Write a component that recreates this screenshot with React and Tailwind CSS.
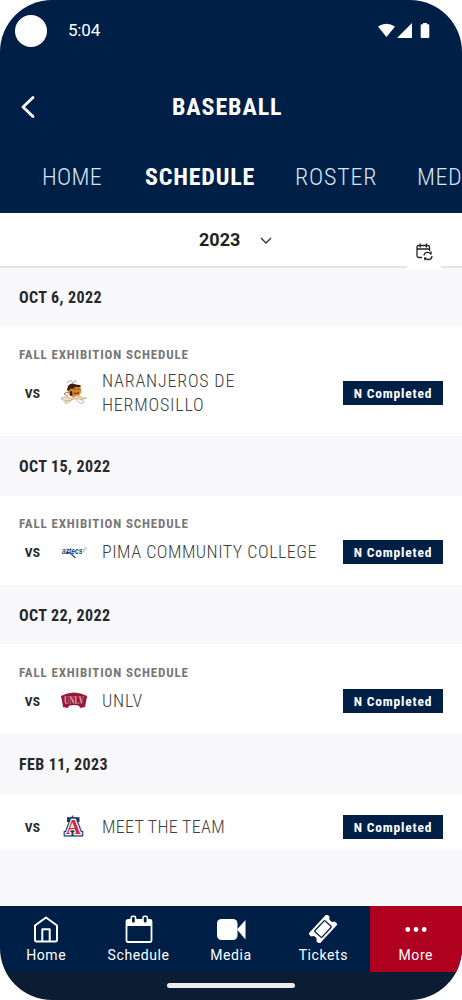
const TABS = [
  { label: 'HOME', active: false, style: 'w-[62px] tracking-[0.3px]' },
  { label: 'SCHEDULE', active: true, style: 'w-[109px] tracking-[0.8px]' },
  { label: 'ROSTER', active: false, style: 'w-[81px] tracking-[0.8px]' },
  { label: 'MEDIA', active: false, style: 'w-[70px] tracking-[0.5px]' },
];

const GAMES = [
  {
    date: 'OCT 6, 2022',
    note: 'FALL EXHIBITION SCHEDULE',
    lines: ['NARANJEROS DE', 'HERMOSILLO'],
    Logo: NaranjerosLogo,
    headerHeight: 'h-[58px]',
    bodyHeight: 'h-[110px] pt-[21px]',
    rowHeight: 'h-[50px]',
    spacing: 'tracking-[0.8px]',
  },
  {
    date: 'OCT 15, 2022',
    note: 'FALL EXHIBITION SCHEDULE',
    lines: ['PIMA COMMUNITY COLLEGE'],
    Logo: AztecsLogo,
    headerHeight: 'h-[60px]',
    bodyHeight: 'h-[89px] pt-5',
    rowHeight: 'h-[30px]',
    spacing: 'tracking-[0.5px]',
  },
  {
    date: 'OCT 22, 2022',
    note: 'FALL EXHIBITION SCHEDULE',
    lines: ['UNLV'],
    Logo: UnlvLogo,
    headerHeight: 'h-[59px]',
    bodyHeight: 'h-[90px] pt-[21px]',
    rowHeight: 'h-[30px]',
    spacing: 'tracking-[0.8px]',
  },
  {
    date: 'FEB 11, 2023',
    note: '',
    lines: ['MEET THE TEAM'],
    Logo: ArizonaLogo,
    headerHeight: 'h-[60px]',
    bodyHeight: 'h-[56px] pt-[18px]',
    rowHeight: 'h-[30px]',
    spacing: 'tracking-[0.3px]',
  },
];

const NAV_ITEMS = [
  { label: 'Home', Icon: HomeIcon },
  { label: 'Schedule', Icon: CalendarIcon },
  { label: 'Media', Icon: VideoIcon },
  { label: 'Tickets', Icon: TicketIcon },
  { label: 'More', Icon: DotsIcon, active: true },
];

function HomeIcon() {
  return (
    <svg className="w-7 h-7" viewBox="0 0 28 28" fill="none" stroke="white" strokeWidth="2" strokeLinejoin="round">
      <path d="M14 2.5L25 10.5V24.8Q25 26.5 23.3 26.5H4.7Q3 26.5 3 24.8V10.5Z" />
      <path d="M10.3 26.5V14.3H17.7V26.5" />
    </svg>
  );
}

function CalendarIcon() {
  return (
    <svg className="w-7 h-7" viewBox="0 0 28 28" fill="none">
      <rect x="1.5" y="5" width="25" height="22" rx="1.5" stroke="white" strokeWidth="1.8" />
      <path d="M2 5h24v6H2z" fill="white" />
      <rect x="6.2" y="1.2" width="4.4" height="7" rx="1.6" fill="#001f47" stroke="white" strokeWidth="1.6" />
      <rect x="18" y="1.2" width="4.4" height="7" rx="1.6" fill="#001f47" stroke="white" strokeWidth="1.6" />
    </svg>
  );
}

function VideoIcon() {
  return (
    <svg className="w-[30px] h-7" viewBox="0 0 30 28" fill="white">
      <rect x="1" y="4" width="20.5" height="21" rx="4.5" />
      <path d="M21 14.5L29.5 5V24.5Z" />
    </svg>
  );
}

function TicketIcon() {
  return (
    <svg className="w-7 h-7" viewBox="0 0 28 28">
      <g transform="rotate(-47 14 14)">
        <path
          d="M2 6.5H26Q27.5 6.5 27.5 8V10.5Q25 11.5 25 14T27.5 17.5V20Q27.5 21.5 26 21.5H2Q0.5 21.5 0.5 20V17.5Q3 16.5 3 14T0.5 10.5V8Q0.5 6.5 2 6.5Z"
          fill="white"
        />
        <rect x="6.6" y="9.2" width="14.8" height="9.6" rx="0.8" fill="white" stroke="#001f47" strokeWidth="1.3" />
      </g>
    </svg>
  );
}

function DotsIcon() {
  return (
    <svg className="w-7 h-7" viewBox="0 0 28 28" fill="white">
      <circle cx="5.8" cy="14.5" r="2.4" />
      <circle cx="14" cy="14.5" r="2.4" />
      <circle cx="22.2" cy="14.5" r="2.4" />
    </svg>
  );
}

function NaranjerosLogo() {
  return (
    <svg className="w-7 h-7" viewBox="0 0 28 28" fill="none">
      <path d="M7 4C9 0.5 12 2 13 4C14 1 17 1.5 16 3.5" stroke="#a88a70" strokeWidth="0.8" />
      <circle cx="14.5" cy="11.5" r="6.8" fill="#dc8126" />
      <path d="M8 7Q10 4 13 4.5L16 6L20.5 6V8L15 8L13 10L10 9.5L9 12L7 11Z" fill="#30201a" />
      <path d="M10 12.5L12 12L12.5 16L10 17Z" fill="#30201a" />
      <path d="M14.5 10.2h1.5M18 10h1.2M14 14Q17 16 19 13" stroke="#4a2412" strokeWidth="1" />
      <path d="M9 14L6 13L4 15L8 17" stroke="#a8714a" strokeWidth="0.9" />
      <path d="M1 19.5Q4 16.5 8 18.5T14 18T20 17.5T26.5 19L22 20.5Q16 18 11 21T1 19.5Z" fill="#f0dcc0" stroke="#c9a27c" strokeWidth="0.8" />
      <path d="M7 21L4.5 24Q7 25.5 9 23L12 20.5M16 20L20 24Q22.5 25 24 23L20 20" stroke="#d0ad8c" strokeWidth="0.9" />
    </svg>
  );
}

function AztecsLogo() {
  return (
    <svg className="w-7 h-7 overflow-visible" viewBox="0 0 28 28" fill="none">
      <path d="M6 14.2L10 14.8L15.5 20" stroke="#304571" strokeWidth="1.3" />
      <path d="M21 13L26.5 9.5L23 14" stroke="#b5a992" strokeWidth="0.8" />
      <text
        x="2"
        y="15.6"
        fontSize="9.5"
        fontWeight="700"
        fontStyle="italic"
        fontFamily="Liberation Sans, sans-serif"
        fill="#304571"
        textLength="20.5"
        lengthAdjust="spacingAndGlyphs"
      >
        aztecs
      </text>
    </svg>
  );
}

function UnlvLogo() {
  return (
    <svg className="w-7 h-7" viewBox="0 0 28 28">
      <path d="M0.8 9Q14 2 27.2 9L26.4 12.5L25 20L20.5 21L18.5 18.5Q14 17.5 9.5 18.5L7.5 21L3 20L1.8 12.5Z" fill="#9c1836" />
      <text
        x="4"
        y="16.6"
        fontFamily="Liberation Serif, serif"
        fontSize="11.5"
        fontWeight="700"
        fill="#f0d2d9"
        stroke="#6b1328"
        strokeWidth="0.3"
        textLength="20"
        lengthAdjust="spacingAndGlyphs"
      >
        UNLV
      </text>
    </svg>
  );
}

function ArizonaLogo() {
  return (
    <svg className="w-7 h-7" viewBox="0 0 28 28" fontFamily="Liberation Serif, serif" fontSize="21" fontWeight="700">
      <path d="M7 4.2H19.5V9H7Z" fill="#18345f" />
      <text x="13.3" y="21" textAnchor="middle" fill="#18345f" stroke="#18345f" strokeWidth="4.8">A</text>
      <text x="13.3" y="21" textAnchor="middle" fill="white" stroke="white" strokeWidth="2.4">A</text>
      <text x="13.3" y="21" textAnchor="middle" fill="#d0283e">A</text>
    </svg>
  );
}

function StatusBar() {
  return (
    <div className="h-[61px] pl-[15px] pr-[31px] flex items-center">
      <div className="w-8 h-8 rounded-full bg-white" />
      <span className="ml-[21px] text-[17px] tracking-[-0.2px] text-white">5:04</span>
      <svg className="ml-auto w-[54px] h-4" viewBox="0 0 54 16" fill="white">
        <path d="M1 3.4Q9.5 -2 18 3.4L9.5 14Z" />
        <path d="M35 0V15H20Z" />
        <path d="M46 0h4v1.2h1.3q1 0 1 1V14q0 1-1 1h-6.6q-1 0-1-1V2.2q0-1 1-1H46z" />
      </svg>
    </div>
  );
}

function Game({ game }) {
  const { Logo } = game;

  return (
    <section>
      <div className={`${game.headerHeight} px-[19px] pt-0.5 flex items-center bg-[#f9f8fb]`}>
        <h2 className="text-base font-bold tracking-[0.4px] text-[#27282c] [font-stretch:80%]">{game.date}</h2>
      </div>
      <div className={`${game.bodyHeight} pl-[19px] pr-[19px] bg-white`}>
        {game.note && (
          <p className="h-[15px] leading-[15px] text-[13px] font-bold tracking-[0.85px] text-[#77777a] [font-stretch:85%]">{game.note}</p>
        )}
        <div className={`${game.rowHeight} mt-[6px] first:mt-0 flex items-center`}>
          <span className="w-[27px] text-center text-[13.5px] font-bold tracking-[0.3px] text-[#27282c] [font-stretch:85%]">VS</span>
          <div className="ml-[14px] w-7 shrink-0">
            <Logo />
          </div>
          <div
            className={`ml-[14px] flex-1 text-[18px] font-light leading-6 text-[#3f3f42] whitespace-nowrap [font-stretch:85%] ${game.spacing}`}
          >
            {game.lines.map((line) => (
              <p key={line}>{line}</p>
            ))}
          </div>
          <span className="w-[100px] h-6 shrink-0 flex items-center justify-center bg-[#001f47] text-[13.5px] font-bold tracking-[0.8px] text-white whitespace-nowrap [font-stretch:80%]">
            N Completed
          </span>
        </div>
      </div>
    </section>
  );
}

export default function App() {
  return (
    <div className="w-[462px] h-[1000px] bg-white font-['Roboto',sans-serif]">
      <div className="h-full flex flex-col rounded-[52px] overflow-hidden bg-[#f9f8fb]">
        <header className="h-[213px] shrink-0 bg-[#001f47] text-white">
          <StatusBar />
          <div className="h-[92px] flex items-center pl-[21px]">
            <svg className="w-[14px] h-6" viewBox="0 0 14 24" fill="none" stroke="white" strokeWidth="2.8" strokeLinecap="round" strokeLinejoin="round">
              <path d="M12 2.5L2 12L12 21.5" />
            </svg>
            <h1 className="ml-[137px] text-[24px] font-bold tracking-[0.9px] [font-stretch:85%]">BASEBALL</h1>
          </div>
          <nav className="h-[48px] pl-[42px] flex items-center gap-[41px] text-[24px]">
            {TABS.map((tab) => (
              <span
                key={tab.label}
                className={`${tab.style} shrink-0 whitespace-nowrap [font-stretch:85%] ${tab.active ? 'font-bold' : 'font-light text-[#d6e6f5]'}`}
              >
                {tab.label}
              </span>
            ))}
          </nav>
        </header>

        <div className="relative h-[55px] shrink-0 bg-white border-b-2 border-[#e6e6e8] flex items-center pl-[199px]">
          <span className="text-[18px] font-bold text-[#1f1f20]">2023</span>
          <svg className="ml-5 w-3 h-3" viewBox="0 0 12 12" fill="none" stroke="#333" strokeWidth="1.3">
            <path d="M1 4L6 9L11 4" />
          </svg>
          <button type="button" className="absolute left-[403px] top-[13px] w-[42px] h-11 pb-[9px] rounded-xl bg-white flex items-end justify-center">
            <svg className="w-[17px] h-[18px]" viewBox="0 0 17 18" fill="none" stroke="#222" strokeWidth="1.3" strokeLinecap="round">
              <path d="M5.5 14.5H3Q1 14.5 1 12.5V4Q1 2.5 2.5 2.5H12Q13.5 2.5 13.5 4V7.5M1 6H13.5M4.2 1V4M10.3 1V4" />
              <path d="M8 12Q9 9 12 9.4Q14 9.6 15 11.5V9M16 13.5Q15 17 12 16.5Q9.5 16.3 8.8 14.2V16.7" />
            </svg>
          </button>
        </div>

        <main className="flex-1">
          {GAMES.map((game) => (
            <Game key={game.date} game={game} />
          ))}
        </main>

        <nav className="h-[66px] shrink-0 grid grid-cols-5 bg-[#001f47]">
          {NAV_ITEMS.map(({ label, Icon, active }) => (
            <button
              type="button"
              key={label}
              className={`flex flex-col items-center pt-[9px] text-white ${active ? 'bg-[#af0020]' : ''}`}
            >
              <Icon />
              <span className="mt-0.5 text-[14px] leading-5 tracking-[0.6px]">{label}</span>
            </button>
          ))}
        </nav>
        <div className="h-[28px] shrink-0 bg-[#0b1c33] flex justify-center">
          <div className="mt-[11px] w-32 h-[5px] rounded-full bg-[#ebeced]" />
        </div>
      </div>
    </div>
  );
}
